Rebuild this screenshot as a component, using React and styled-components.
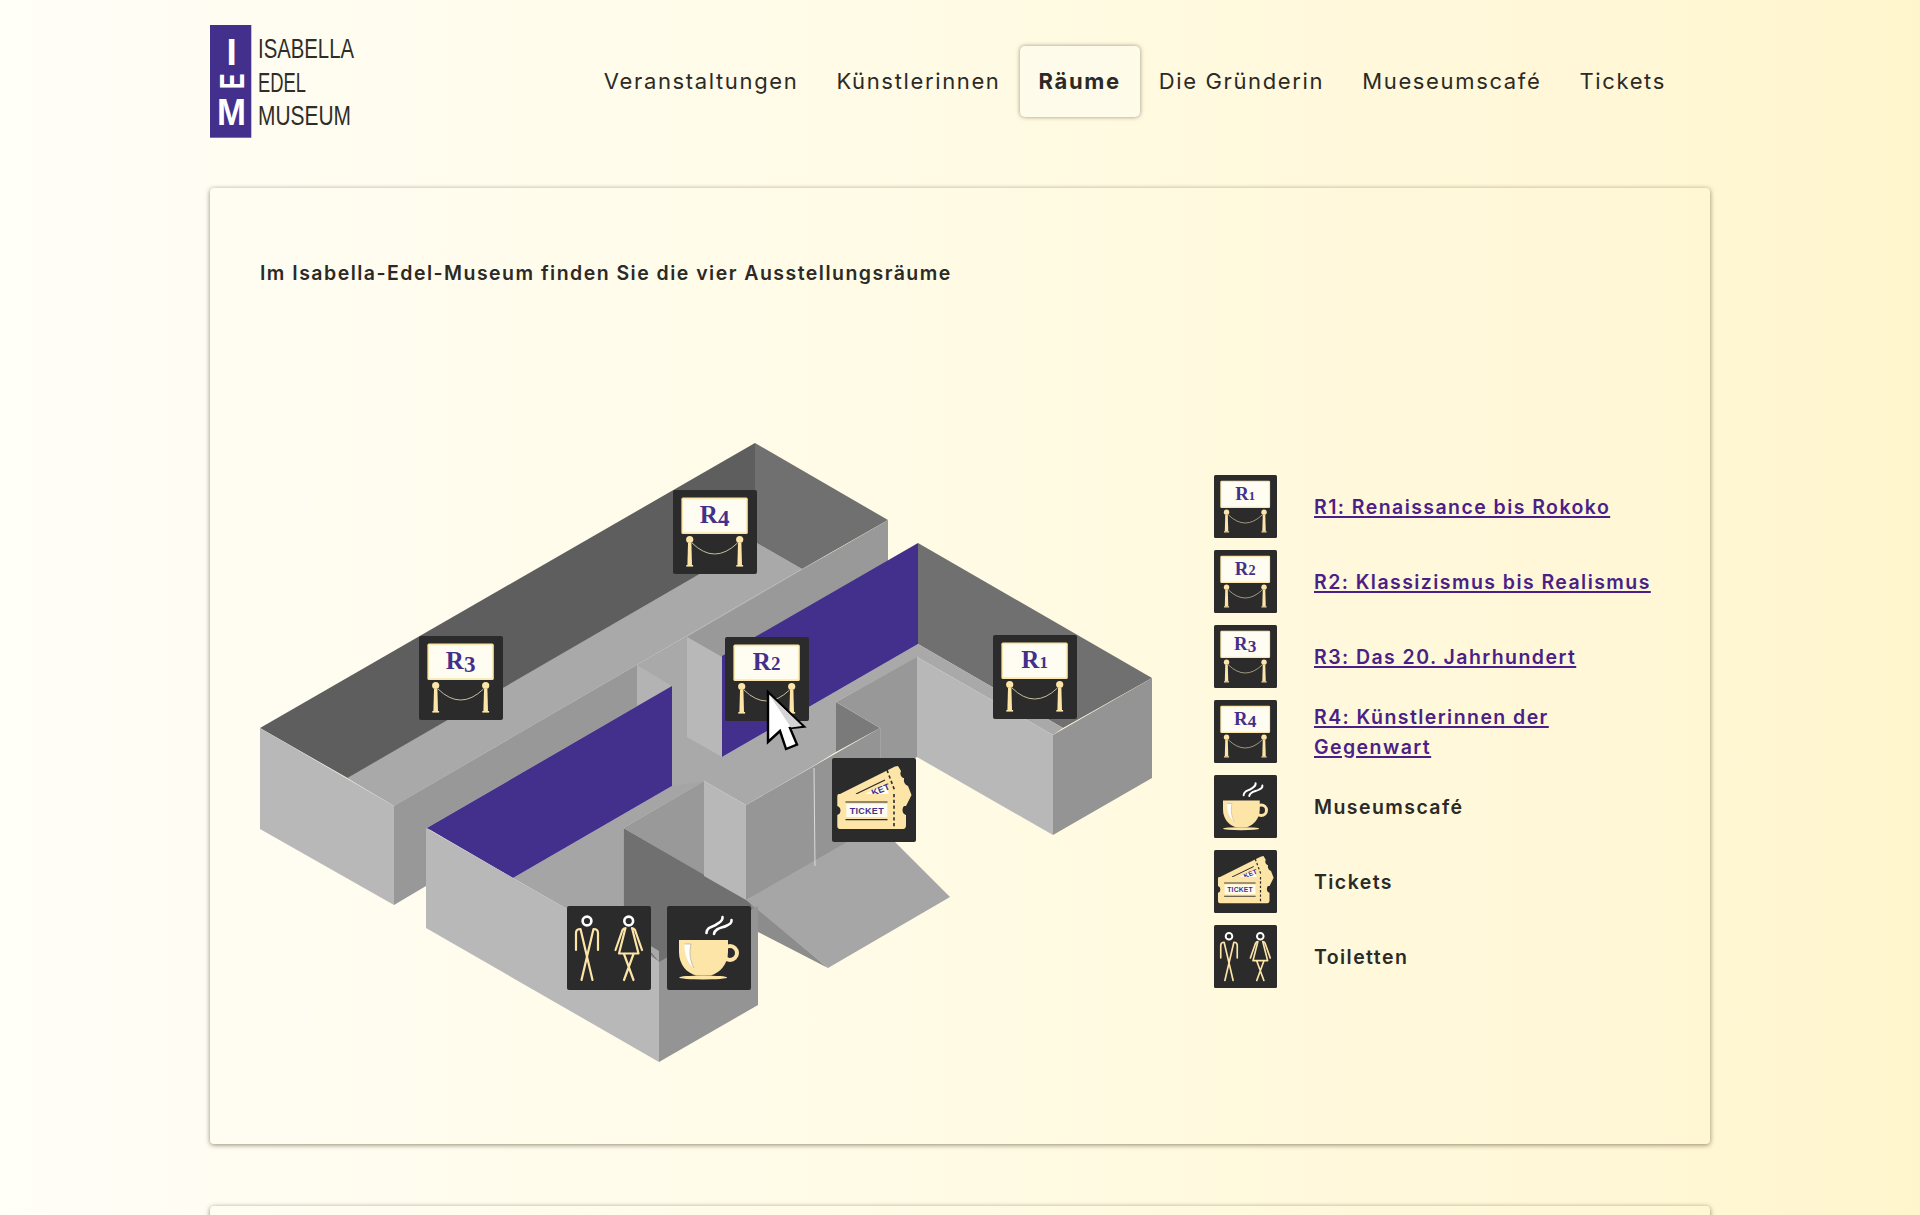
import React from 'react'
import styled, { createGlobalStyle } from 'styled-components'

const PURPLE = '#43308c'
const CREAM = '#fde5a8'
const DARK = '#2b2b2b'

const Global = createGlobalStyle`
  html, body {
    margin: 0;
    padding: 0;
  }
  body {
    background: linear-gradient(to right, #fffef7 0%, #fffbe6 45%, #fff7d6 85%, #fff5cd 100%);
    color: #2b2a26;
    font-family: Inter, "Liberation Sans", sans-serif;
  }
  #root {
    height: 100vh;
    overflow: hidden;
  }
`

const Page = styled.div`
  width: 1500px;
  margin: 0 auto;
`
const Header = styled.header`
  display: flex;
  align-items: flex-start;
  justify-content: space-between;
  height: 163px;
  padding: 25px 25px 0 0;
`
const Logo = styled.svg`
  display: block;
  width: 200px;
  height: 113px;
`
const Nav = styled.nav`
  display: flex;
  align-items: center;
  margin-top: 21px;
`
const NavItem = styled.a`
  display: flex;
  align-items: center;
  height: 69px;
  padding: 0 19px 2px;
  border-radius: 5px;
  font-size: 22px;
  letter-spacing: 1.64px;
  font-weight: ${p => (p.$active ? 700 : 400)};
  box-shadow: ${p => (p.$active ? '0 0 4px rgba(70, 60, 30, 0.55)' : 'none')};
  background: ${p => (p.$active ? 'rgba(255, 255, 255, 0.3)' : 'transparent')};
`
const Card = styled.section`
  border-radius: 4px;
  box-shadow: 0 1px 5px rgba(70, 60, 30, 0.6);
  padding: ${p => (p.$empty ? '0' : '70px 50px 81px')};
  height: ${p => (p.$empty ? '160px' : 'auto')};
  margin-bottom: 62px;
`
const Intro = styled.p`
  margin: 0 0 155px;
  font-size: 19.5px;
  line-height: 30px;
  font-weight: 600;
  letter-spacing: 1.47px;
`
const Columns = styled.div`
  display: grid;
  grid-template-columns: 892px 1fr;
  column-gap: 62px;
  align-items: start;
`
const MapWrap = styled.div`
  position: relative;
  width: 892px;
  height: 620px;
`
const MapShape = styled.svg`
  display: block;
  width: 892px;
  height: 620px;
`
const Pin = styled.div`
  position: absolute;
  left: ${p => p.$x}px;
  top: ${p => p.$y}px;
  width: 84px;
  height: 84px;
`
const Cursor = styled.svg`
  position: absolute;
  left: 505px;
  top: 246px;
  width: 42px;
  height: 64px;
`
const Legend = styled.ul`
  display: grid;
  row-gap: 12px;
  margin: 32px 0 0;
  padding: 0;
  list-style: none;
`
const LegendRow = styled.li`
  display: grid;
  grid-template-columns: 63px 1fr;
  column-gap: 37px;
  align-items: center;
  height: 63px;
`
const LegendIcon = styled.div`
  width: 63px;
  height: 63px;
`
const LegendLink = styled.a`
  color: #4b1f87;
  font-size: 19.5px;
  line-height: 30px;
  font-weight: 600;
  letter-spacing: 1.43px;
  text-decoration: underline;
  text-decoration-thickness: 2px;
  text-underline-offset: 2px;
`
const LegendText = styled.span`
  font-size: 19.5px;
  line-height: 30px;
  font-weight: 600;
  letter-spacing: 1.43px;
`
const IconSvg = styled.svg`
  display: block;
  width: 100%;
  height: 100%;
`

const digitStyle = {
  1: { size: 17, dy: 0 },
  2: { size: 19, dy: 0 },
  3: { size: 23, dy: 3 },
  4: { size: 23, dy: 3 }
}

function Post({ x }) {
  return (
    <g fill={CREAM}>
      <circle cx={x} cy="49.5" r="3.6" />
      <path d={`M${x - 1.7} 53 h3.4 l0.6 22 h-4.6 z`} />
      <rect x={x - 3.4} y="75" width="6.8" height="1.6" />
    </g>
  )
}

function RoomIcon({ n }) {
  const d = digitStyle[n]
  return (
    <IconSvg viewBox="0 0 84 84">
      <rect width="84" height="84" rx="2" fill={DARK} />
      <rect x="8.4" y="7.6" width="66.4" height="36.4" rx="1.6" fill="#fbe7ac" />
      <rect x="10" y="9.2" width="63.2" height="33" rx="1" fill="#fffdf1" />
      <text
        x="41.6"
        y="32.7"
        textAnchor="middle"
        fontFamily='"Liberation Serif", serif'
        fontWeight="700"
        fontSize="25"
        fill={PURPLE}
      >
        R
        <tspan fontSize={d.size} dy={d.dy}>
          {n}
        </tspan>
      </text>
      <path d="M19 53 Q41.6 75 64.5 53" fill="none" stroke="#d8cda5" strokeWidth="0.9" />
      <Post x={16.7} />
      <Post x={66.7} />
    </IconSvg>
  )
}

function CafeIcon() {
  return (
    <IconSvg viewBox="0 0 84 84">
      <rect width="84" height="84" rx="2" fill={DARK} />
      <g fill="none" stroke="#fff" strokeWidth="2.6" strokeLinecap="round">
        <path d="M39.5 27 C40 20 47 21 50 18 C53 16 56 15 55.5 11" />
        <path d="M47 28 C48 22 55 22 59 20 C63 18 65 17 64.5 14" />
      </g>
      <circle cx="63" cy="47" r="7" fill="none" stroke={CREAM} strokeWidth="4" />
      <path d="M12 34 H61 V46 C61 59 52 67 44 69.5 H29 C20 67 12 59 12 46 Z" fill={CREAM} />
      <ellipse cx="36.2" cy="71.5" rx="24" ry="2" fill={CREAM} />
      <path d="M17.5 38 H24 C22 46 23 55 27 62 C21 58 17 48 17.5 38 Z" fill="#fff" />
      <path d="M17.5 38 H24 C22 46 23 55 27 62" fill="none" stroke="#a9a08a" strokeWidth="0.6" />
    </IconSvg>
  )
}

function TicketIcon() {
  return (
    <IconSvg viewBox="0 0 84 84">
      <rect width="84" height="84" rx="2" fill={DARK} />
      <path
        d="M6 37 L60 10 Q63 8 66 8 L69 13 Q67 17 71 20 L72 20 Q71 26 76 28 L79.5 37 L74 48 H6 Z"
        fill={CREAM}
      />
      <path d="M24 36 L53 22" stroke={DARK} strokeWidth="1.3" />
      <path d="M33 36 L53 26 L57 36 Z" fill="#fffdf1" />
      <text
        x="41"
        y="38"
        fontFamily='"Liberation Sans", sans-serif'
        fontWeight="700"
        fontSize="9"
        letterSpacing="0.3"
        fill={PURPLE}
        transform="rotate(-22 41 38)"
      >
        KET
      </text>
      <path
        d="M7 36 H72 Q74 36 74 38 V47 Q70.5 48 70.5 52 Q70.5 56 74 57 V67 Q74 71 71 71 H8 Q5.3 71 5.3 68 V57 Q8.5 56 8.5 52.5 Q8.5 49 5.3 48 V38 Q5.3 36 7 36 Z"
        fill={CREAM}
      />
      <path d="M13.5 44 H55.5 M13.5 61.7 H55.5" stroke={DARK} strokeWidth="1.2" />
      <rect x="14.3" y="46" width="41" height="13" fill="#fffdf1" />
      <text
        x="34.8"
        y="56"
        textAnchor="middle"
        fontFamily='"Liberation Sans", sans-serif'
        fontWeight="700"
        fontSize="9"
        fill={PURPLE}
        letterSpacing="0.3"
      >
        TICKET
      </text>
      <path d="M62 36 V70 M55 12 L62.5 32" stroke={DARK} strokeWidth="1.6" strokeDasharray="3.2 2.6" />
    </IconSvg>
  )
}

function ToiletIcon() {
  return (
    <IconSvg viewBox="0 0 84 84">
      <rect width="84" height="84" rx="2" fill={DARK} />
      <circle cx="20" cy="15" r="4.4" fill="none" stroke="#fff" strokeWidth="2.6" />
      <circle cx="61.7" cy="15" r="4.4" fill="none" stroke="#fff" strokeWidth="2.6" />
      <g fill="none" stroke={CREAM} strokeWidth="2.2" strokeLinejoin="round" strokeLinecap="round">
        <path d="M9 44 V27 Q9 23 13.5 23 L25.5 74" />
        <path d="M31 44 V27 Q31 23 26.5 23 L14.5 74" />
        <path d="M48.5 44 L55.5 24 Q56.5 22 58.5 22 L52 47.5 H71.5 L65 22 Q67 22 68 24 L75 44" />
        <path d="M57 48 L66.5 74 M66.5 48 L57 74" />
      </g>
    </IconSvg>
  )
}

const faces = [
  // floors first, everything else is drawn on top; the first one only hides seams
  ['#a9a9a9', '394,806 802,569 888,522 888,561 722,757 672,786 426,830'],
  ['#a9a9a9', '347,778 755,542 802,569 394,806'],
  ['#a9a9a9', '637,665 687,637 687,737 722,757 918,644 918,657 836,702 836,752 815,765 746,805 704,781 623,828 672,786 672,686'],
  ['#a5a5a5', '513,878 672,786 704,781 623.5,828 623.5,930 650,945 659,962'],
  ['#5e5e5e', '260,728 755,443 755,542 347.5,778'],
  ['#707070', '755,443 888,520 802,569 755,542'],
  ['#b8b8b8', '260,728 394,806 394,905 260,829'],
  ['#989898', '394,806 637,665 637,706 426,828 426,886 394,905'],
  ['#b3b3b3', '637,665 672,686 637,706'],
  ['#99999a', '888,520 888,561 722,657 687,637'],
  ['#b8b8b8', '687,637 722,657 722,757 687,737'],
  [PURPLE, '918,543 918,644 722,757 722,656'],
  [PURPLE, '427,828 672,686 672,786 513,878'],
  ['#707070', '918,543 1152,678 1063,728 918,644'],
  ['#a9a9a9', '918,644 1063,728 1053,735 917,657'],
  ['#b8b8b8', '917,657 1053,735 1053,835 917,757'],
  ['#949494', '1053,735 1152,678 1152,778 1053,835'],
  ['#999999', '623.5,828 704,781 704,875'],
  ['#707070', '623.5,828 758,906 758,1000 659,962 623.5,930'],
  ['#b8b8b8', '704,781 746,805 746,900 704,876'],
  ['#969696', '746,805 814,766 814,866 746,900'],
  ['#949494', '814,766 880,728 880,825 814,866'],
  ['#7a7a7a', '836,702 880,728 836,752'],
  ['#989898', '880,728 836,702 917,657 917,757 880,778'],
  ['#8c8c8c', '750,902 828,968 758,932'],
  ['#a6a6a6', '746,900 880,823 895,842 950,897 828,968'],
  ['#b8b8b8', '426,828 513,878 659,962 659,1062 426,928'],
  ['#a8a8a8', '641,940 659,951 659,962'],
  ['#949494', '659,962 758,906 758,1005 659,1062']
]

const pins = [
  { x: 159, y: 193, icon: <RoomIcon n={3} /> },
  { x: 413.3, y: 47, icon: <RoomIcon n={4} /> },
  { x: 465.3, y: 194.3, icon: <RoomIcon n={2} /> },
  { x: 732.7, y: 192.3, icon: <RoomIcon n={1} /> },
  { x: 572.3, y: 314.7, icon: <TicketIcon /> },
  { x: 306.9, y: 463, icon: <ToiletIcon /> },
  { x: 406.7, y: 463, icon: <CafeIcon /> }
]

const legend = [
  { icon: <RoomIcon n={1} />, label: 'R1: Renaissance bis Rokoko', link: true },
  { icon: <RoomIcon n={2} />, label: 'R2: Klassizismus bis Realismus', link: true },
  { icon: <RoomIcon n={3} />, label: 'R3: Das 20. Jahrhundert', link: true },
  { icon: <RoomIcon n={4} />, label: 'R4: Künstlerinnen der Gegenwart', link: true },
  { icon: <CafeIcon />, label: 'Museumscafé' },
  { icon: <TicketIcon />, label: 'Tickets' },
  { icon: <ToiletIcon />, label: 'Toiletten' }
]

const navItems = ['Veranstaltungen', 'Künstlerinnen', 'Räume', 'Die Gründerin', 'Mueseumscafé', 'Tickets']

export default function App() {
  return (
    <Page>
      <Global />
      <Header>
        <Logo viewBox="210 25 200 113">
          <rect x="210" y="25" width="41.3" height="112.7" fill={PURPLE} />
          <g fill="#fff" fontFamily='"Liberation Sans", sans-serif' fontWeight="700">
            <text x="226.5" y="65" fontSize="37">
              I
            </text>
            <text
              fontSize="34.5"
              textLength="15.5"
              lengthAdjust="spacingAndGlyphs"
              transform="translate(244 89) rotate(-90)"
            >
              E
            </text>
            <text x="217" y="125" fontSize="37" textLength="29" lengthAdjust="spacingAndGlyphs">
              M
            </text>
          </g>
          <g fill="#2f2d28" fontFamily='"Liberation Sans", sans-serif' fontSize="28">
            <text x="258" y="58.3" textLength="96" lengthAdjust="spacingAndGlyphs">
              ISABELLA
            </text>
            <text x="258" y="91.5" textLength="48" lengthAdjust="spacingAndGlyphs">
              EDEL
            </text>
            <text x="258" y="125" textLength="93" lengthAdjust="spacingAndGlyphs">
              MUSEUM
            </text>
          </g>
        </Logo>
        <Nav>
          {navItems.map(item => (
            <NavItem key={item} $active={item === 'Räume'}>
              {item}
            </NavItem>
          ))}
        </Nav>
      </Header>

      <Card>
        <Intro>Im Isabella-Edel-Museum finden Sie die vier Ausstellungsräume</Intro>
        <Columns>
          <MapWrap>
            <MapShape viewBox="260 443 892 620">
              {faces.map(([fill, points]) => (
                <polygon key={points} fill={fill} points={points} />
              ))}
              <path d="M814 768 L815 866" stroke="#dcdcdc" strokeWidth="1" />
              <path d="M880.5 728 V778" stroke="#a3a3a3" strokeWidth="1" />
            </MapShape>
            {pins.map(pin => (
              <Pin key={`${pin.x}-${pin.y}`} $x={pin.x} $y={pin.y}>
                {pin.icon}
              </Pin>
            ))}
            <Cursor viewBox="0 0 42 64">
              <path
                d="M3 3 V53 L15 42 L21 60 L32 55.5 L25 39 L39 37.5 Z"
                fill="#fff"
                stroke="#000"
                strokeWidth="2.4"
                strokeLinejoin="miter"
              />
              <path d="M4.5 6 L37 37 L26 38.5 Z" fill="#d4d4d4" />
            </Cursor>
          </MapWrap>
          <Legend>
            {legend.map(row => (
              <LegendRow key={row.label}>
                <LegendIcon>{row.icon}</LegendIcon>
                <div>
                  {row.link ? <LegendLink>{row.label}</LegendLink> : <LegendText>{row.label}</LegendText>}
                </div>
              </LegendRow>
            ))}
          </Legend>
        </Columns>
      </Card>
      <Card $empty />
    </Page>
  )
}
